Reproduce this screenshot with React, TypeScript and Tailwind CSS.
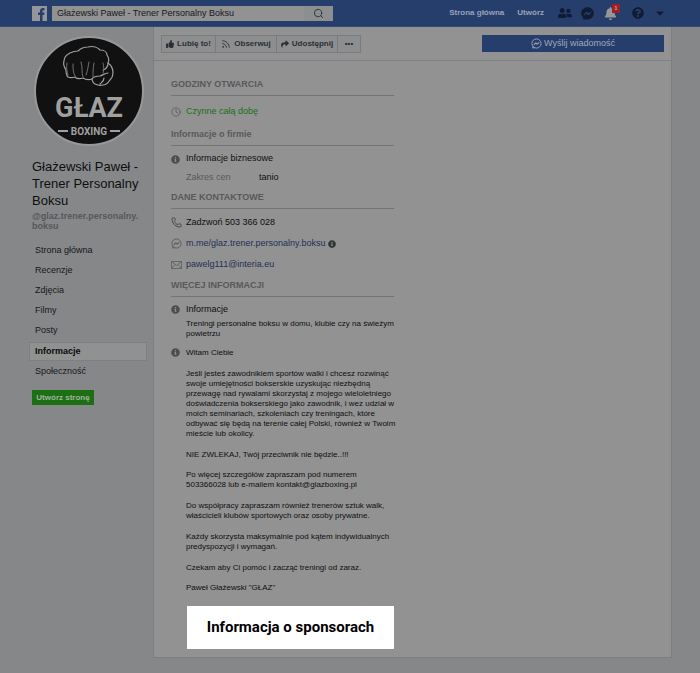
import type { ReactNode } from "react";
import {
  FaCaretDown,
  FaFacebookMessenger,
  FaInfoCircle,
  FaQuestionCircle,
  FaShare,
  FaThumbsUp,
  FaUserFriends,
  FaBell,
} from "react-icons/fa";
import { Clock, Phone, Rss, Search } from "lucide-react";

const navItems = [
  "Strona główna",
  "Recenzje",
  "Zdjęcia",
  "Filmy",
  "Posty",
  "Informacje",
  "Społeczność",
];

function MessengerOutline({ className }: { className: string }) {
  return (
    <svg className={className} viewBox="0 0 24 24" fill="none" stroke="currentColor">
      <circle cx="12" cy="12" r="10" strokeWidth={2} />
      <path strokeWidth={2} strokeLinejoin="round" d="M4 18v4l4-1" />
      <path strokeWidth={2.500} strokeLinejoin="round" d="m6 15 4.500-4.500 3 3L18 9.500" />
    </svg>
  );
}

function Logo() {
  return (
    <svg className="ml-[2px] size-[110px]" viewBox="0 0 110 110" role="img" aria-label="Głaz Boxing">
      <circle cx="55" cy="55" r="54" fill="#111112" stroke="#97989a" strokeWidth="2" />
      {/* pięść */}
      <g fill="none" stroke="#a0a0a1" strokeWidth="1.2" strokeLinejoin="round" strokeLinecap="round">
        <path d="M30 25c0-3 2-6 6-8 2-1 5-2 8-2 3-3 7-4 10-4 4-1 9 0 12 3 4 0 7 2 7 5 2 3 2 6 1 8 3 2 5 6 5 10 0 3-1 5-3 7-2 3-4 5-7 5-3 1-6 0-8-1-2-1-3-4-3-5-3 1-6 1-9-1-3 1-6 1-8-1-3 1-5 1-7 0-2-2-2-4-2-7-2-3-3-6-2-9Z" />
        <path d="M58 43c2-3 5-3 8-3 3-1 5-3 8-3M66 48c2-2 4-3 4-6M74 27c0 4-2 6-5 7" />
      </g>
      <g fill="none" stroke="#707071" strokeWidth="1" strokeLinecap="round">
        <path d="M39 28c0 5 0 8 2 12M47 26c2 5 0 10 2 15M60 27c-1 5-1 9-1 14M69 27c1 4 1 7 0 10M33 27c-1 5 0 8 1 12M55 26c-1 4-1 8-3 13" />
      </g>
      <text
        x="55"
        y="81"
        textAnchor="middle"
        fontSize="27"
        className="font-[Roboto,sans-serif] font-bold"
        fill="#a0a0a1"
      >
        GŁAZ
      </text>
      <text
        x="55"
        y="99"
        textAnchor="middle"
        fontSize="10"
        className="font-[Roboto,sans-serif] font-bold"
        fill="#a0a0a1"
      >
        BOXING
      </text>
      <path d="M24 95h10M76 95h10" stroke="#a0a0a1" strokeWidth="2" />
    </svg>
  );
}

function TopBar() {
  return (
    <header className="flex h-[27px] items-center border-b border-[#324a78] bg-[#263e6c] pr-[34px] pl-8 text-[8px] font-bold text-[#9aa3b5]">
      <a href="#" aria-label="Facebook" className="mr-[5px] shrink-0">
        <svg className="size-[15px]" viewBox="0 0 15 15">
          <rect width="15" height="15" fill="#959699" />
          <path
            fill="#263e6c"
            d="M8 15V9H6V6.500h2V5c0-2 1.200-3 3-3h1.500v2.300h-1.100c-.7 0-.9.300-.9 1v1.200h2L12.200 9h-1.700v6Z"
          />
        </svg>
      </a>
      <form className="flex h-[15px] w-[281px] bg-[#929292]">
        <input
          aria-label="Szukaj"
          defaultValue="Głażewski Paweł - Trener Personalny Boksu"
          className="min-w-0 flex-1 px-[5px] pt-[2px] text-[9px] font-normal text-[#16181c] outline-none"
        />
        <button
          type="button"
          aria-label="Szukaj"
          className="flex w-[29px] items-center justify-center bg-[#8d8e8f] text-[#2e3136]"
        >
          <Search className="size-[11px]" />
        </button>
      </form>
      <nav className="ml-auto flex items-center">
        <a href="#">Strona główna</a>
        <a href="#" className="ml-[13px]">Utwórz</a>
        <button aria-label="Zaproszenia" className="ml-[14px] text-[#111c33]">
          <FaUserFriends className="size-[14px]" />
        </button>
        <button aria-label="Wiadomości" className="ml-[9px] text-[#111c33]">
          <FaFacebookMessenger className="size-[13px]" />
        </button>
        <button aria-label="Powiadomienia" className="relative ml-[10px] text-[#959699]">
          <FaBell className="size-[13px]" />
          <span className="absolute -top-[3px] left-[8px] flex h-[9px] w-[8px] items-center justify-center bg-[#a01f26] text-[6px] text-[#b9a0a3]">
            1
          </span>
        </button>
        <button aria-label="Pomoc" className="ml-[15px] text-[#111c33]">
          <FaQuestionCircle className="size-[12px]" />
        </button>
        <button aria-label="Menu" className="ml-[10px] text-[#111c33]">
          <FaCaretDown className="size-[12px]" />
        </button>
      </nav>
    </header>
  );
}

function Sidebar() {
  return (
    <aside className="w-[153px] shrink-0 pt-[9px] pl-8">
      <Logo />
      <h1 className="mt-[12px] text-[13px] leading-[17px] text-[#0d0e10]">
        Głażewski Paweł -<br />
        Trener Personalny
        <br />
        Boksu
      </h1>
      <p className="mt-[2px] text-[9px] leading-[10px] font-bold text-[#55585c]">
        @glaz.trener.personalny.
        <br />
        boksu
      </p>
      <nav className="mt-[10px] -ml-[3px] pr-[6px]">
        {navItems.map((item) => (
          <a
            key={item}
            href="#"
            className={
              item === "Informacje"
                ? "my-[1px] flex h-[19px] items-center border border-[#7e7f81] bg-[#909191] pl-[5px] text-[9px] font-bold text-[#090a0b]"
                : "flex h-[20px] items-center pl-[6px] text-[9px] text-[#15171a]"
            }
          >
            {item}
          </a>
        ))}
      </nav>
      <button className="mt-[8px] flex h-[15px] w-[62px] items-center justify-center bg-[#1d6f14] text-[8px] font-bold text-[#9fb39c]">
        Utwórz stronę
      </button>
    </aside>
  );
}

function Toolbar() {
  const button = "flex items-center justify-center gap-[3px] border-r border-[#797b7e]";
  return (
    <div className="flex h-[34px] items-center justify-between border-b border-[#808182] px-[7px]">
      <div className="flex h-[18px] border border-r-0 border-[#797b7e] bg-[#8d8e8f] text-[8px] font-bold text-[#2b2e34]">
        <button className={`${button} w-[54px]`}>
          <FaThumbsUp className="size-[8px]" />
          Lubię to!
        </button>
        <button className={`${button} w-[61px]`}>
          <Rss className="size-[10px]" strokeWidth={2} />
          Obserwuj
        </button>
        <button className={`${button} w-[61px]`}>
          <FaShare className="size-[8px]" />
          Udostępnij
        </button>
        <button aria-label="Więcej" className={`${button} w-[23px]`}>
          •••
        </button>
      </div>
      <button className="flex h-[17px] w-[182px] items-center justify-center gap-[2px] bg-[#263e6c] text-[9px] text-[#a0a8b8]">
        <MessengerOutline className="size-[11px]" />
        Wyślij wiadomość
      </button>
    </div>
  );
}

function Section({ title, children }: { title: string; children: ReactNode }) {
  return (
    <section>
      <h2 className="flex h-[22px] items-center border-b border-[#747474] text-[9px] font-bold text-[#58595b]">
        {title}
      </h2>
      <div className="pt-[3px]">{children}</div>
    </section>
  );
}

function InfoIcon() {
  return <FaInfoCircle className="size-[9px] text-[#4c4e52]" />;
}

function Row({ icon, height, children }: { icon?: ReactNode; height: string; children: ReactNode }) {
  return (
    <div className={`flex items-center text-[9px] ${height}`}>
      <span className="flex w-[15px] shrink-0">{icon}</span>
      {children}
    </div>
  );
}

export default function App() {
  return (
    <div className="min-h-screen bg-[#868789] font-['Liberation_Sans',Arial,sans-serif] text-[#0e0f11]">
      <TopBar />
      <div className="flex">
        <Sidebar />
        <main className="mr-7 flex-1 border-r border-b border-l border-[#7d7e80] bg-[#929292] pb-2">
          <Toolbar />
          <div className="mt-[13px] ml-[17px] w-[223px]">
            <Section title="GODZINY OTWARCIA">
              <Row icon={<Clock className="size-[10px] text-[#595b5e]" />} height="h-[25px]">
                <span className="text-[#1d6f1a]">Czynne całą dobę</span>
              </Row>
            </Section>
            <Section title="Informacje o firmie">
              <Row icon={<InfoIcon />} height="h-[20px]">
                Informacje biznesowe
              </Row>
              <Row height="h-[18px]">
                <span className="w-[73px] text-[#58595b]">Zakres cen</span>
                <span>tanio</span>
              </Row>
            </Section>
            <Section title="DANE KONTAKTOWE">
              <Row icon={<Phone className="size-[11px] text-[#44464a]" />} height="h-[21px]">
                Zadzwoń 503 366 028
              </Row>
              <Row icon={<MessengerOutline className="size-[11px] text-[#595b5e]" />} height="h-[21px]">
                <a href="#" className="mr-[3px] text-[#1f3057]">
                  m.me/glaz.trener.personalny.boksu
                </a>
                <FaInfoCircle className="size-[8px] text-[#33353a]" />
              </Row>
              <Row
                icon={
                  <svg className="h-[8px] w-[11px] text-[#65676a]" viewBox="0 0 11 8" fill="none" stroke="currentColor">
                    <path strokeWidth={1} d="M.5.5h10v7H.5ZM.5.5l5 4 5-4M.5 7.500l3.500-4M10.500 7.500 7 3.500" />
                  </svg>
                }
                height="h-[21px]"
              >
                <a href="#" className="text-[#1f3057]">pawelg111@interia.eu</a>
              </Row>
            </Section>
            <Section title="WIĘCEJ INFORMACJI">
              <Row icon={<InfoIcon />} height="h-[19px]">
                Informacje
              </Row>
              <p className="pl-[15px] text-[8px] leading-[10px] whitespace-nowrap">
                Treningi personalne boksu w domu, klubie czy na świeżym
                <br />
                powietrzu
              </p>
              <div className="mt-[9px] flex text-[8px] leading-[10px]">
                <span className="w-[15px] shrink-0">
                  <InfoIcon />
                </span>
                <div className="space-y-[11px] whitespace-nowrap">
                  <p>Witam Ciebie</p>
                  <p>
                    Jeśli jesteś zawodnikiem sportów walki i chcesz rozwinąć
                    <br />
                    swoje umiejętności bokserskie uzyskując niezbędną
                    <br />
                    przewagę nad rywalami skorzystaj z mojego wieloletniego
                    <br />
                    doświadczenia bokserskiego jako zawodnik, i wez udział w
                    <br />
                    moich seminariach, szkoleniach czy treningach, które
                    <br />
                    odbywać się będą na terenie całej Polski, również w Twoim
                    <br />
                    mieście lub okolicy.
                  </p>
                  <p>
                    NIE ZWLEKAJ, Twój przeciwnik nie będzie..!!!
                    <br />
                    <br />
                    Po więcej szczegółów zapraszam pod numerem
                    <br />
                    503366028 lub e-mailem kontakt@glazboxing.pl
                  </p>
                  <p>
                    Do współpracy zapraszam również trenerów sztuk walk,
                    <br />
                    właścicieli klubów sportowych oraz osoby prywatne.
                  </p>
                  <p>
                    Każdy skorzysta maksymalnie pod kątem indywidualnych
                    <br />
                    predyspozycji i wymagań.
                  </p>
                  <p>
                    Czekam aby Ci pomóc i zacząć treningi od zaraz.
                    <br />
                    <br />
                    Paweł Głażewski "GŁAZ"
                  </p>
                </div>
              </div>
            </Section>
            <div className="mt-[13px] ml-[16px] flex h-[43px] items-center justify-center bg-white font-[Roboto,sans-serif] text-[15px] font-bold text-black">
              Informacja o sponsorach
            </div>
          </div>
        </main>
      </div>
    </div>
  );
}
